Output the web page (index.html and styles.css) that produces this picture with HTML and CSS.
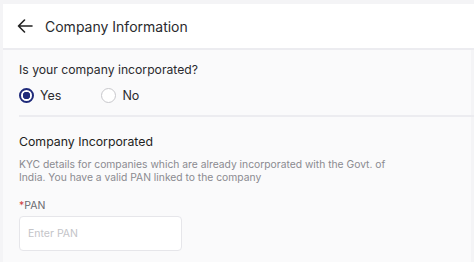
FILE: index.html
```
<!DOCTYPE html>
<html lang="en">
<head>
    <meta charset="UTF-8">
    <meta name="viewport" content="width=device-width, initial-scale=1.0">
    <title>Company Information</title>
    <link rel="stylesheet" href="styles.css">
</head>
<body>
    <div class="panel">
        <div class="header">
            <svg class="back" width="16" height="14" viewBox="0 0 16 14">
                <path d="M15 7H1.5M7.5 1L1.5 7L7.5 13" fill="none" stroke="#222" stroke-width="1.6" stroke-linecap="round" stroke-linejoin="round"/>
            </svg>
            <span class="title">Company Information</span>
        </div>
        <div class="content">
            <div class="question">
                <p class="label">Is your company incorporated?</p>
                <div class="radios">
                    <label class="radio"><span class="dot checked"></span>Yes</label>
                    <label class="radio"><span class="dot"></span>No</label>
                </div>
            </div>
            <div class="section">
                <h2>Company Incorporated</h2>
                <p class="desc">KYC details for companies which are already incorporated with the Govt. of India. You have a valid PAN linked to the company</p>
                <p class="field-label"><span class="req">*</span>PAN</p>
                <div class="input">Enter PAN</div>
            </div>
        </div>
    </div>
</body>
</html>
```

FILE: styles.css
```
*{
    margin: 0;
    padding: 0;
    box-sizing: border-box;
    font-family: 'Inter', sans-serif;
}
body{
    background: #f4f4f6;
    padding: 4px 3px 0 3px;
    height: 262px;
    overflow: hidden;
}
.panel{
    background: #fafafb;
    height: 100%;
}
.header{
    display: flex;
    align-items: center;
    height: 46px;
    padding-left: 14px;
    background: #fff;
    border-bottom: 2px solid #ececf0;
    margin-right: -3px;
}
.back{
    margin-right: 12px;
}
.title{
    font-size: 14px;
    color: #2a2a2e;
}
.content{
    padding: 0 0 0 16px;
}
.question{
    padding: 11px 0 12px;
    border-bottom: 2px solid #ececf0;
    margin-right: -3px;
}
.label{
    font-size: 12.2px;
    color: #2a2a2e;
    line-height: 18px;
}
.radios{
    display: flex;
    gap: 40px;
    margin-top: 9px;
}
.radio{
    display: flex;
    align-items: center;
    gap: 6px;
    font-size: 12.5px;
    color: #2a2a2e;
}
.dot{
    width: 15px;
    height: 15px;
    border-radius: 50%;
    border: 1.5px solid #c8c8cc;
    background: #fff;
}
.dot.checked{
    border: 2px solid #1f2a7a;
    background: radial-gradient(circle, #1f2a7a 0 3.5px, #fff 4px);
}
.section{
    padding-top: 16px;
}
h2{
    font-size: 12.3px;
    font-weight: 400;
    color: #1e1e22;
    line-height: 18px;
}
.desc{
    margin-top: 7px;
    font-size: 10.3px;
    line-height: 13px;
    color: #8a8a90;
    width: 375px;
}
.field-label{
    margin-top: 15px;
    font-size: 10.5px;
    color: #6a6a70;
}
.req{
    color: #d04040;
}
.input{
    margin-top: 4px;
    width: 163px;
    height: 35px;
    background: #fff;
    border: 1px solid #e6e6ea;
    border-radius: 4px;
    font-size: 10.5px;
    color: #c4c4c8;
    padding-left: 8px;
    display: flex;
    align-items: center;
}
```
